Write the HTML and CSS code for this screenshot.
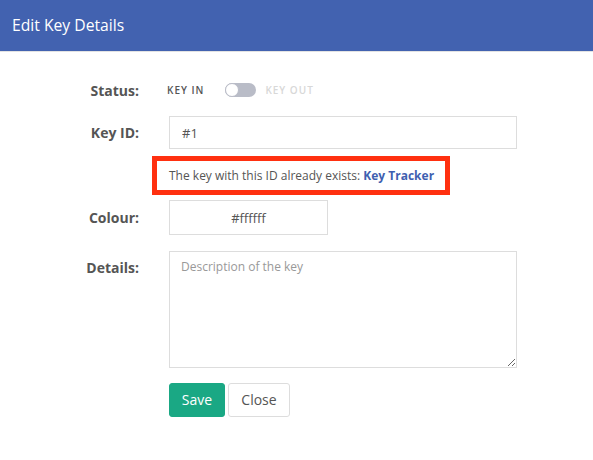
FILE: index.html
```html
<!DOCTYPE html>
<html>
<head>
<meta charset="utf-8">
<link rel="stylesheet" href="styles.css">
</head>
<body>
<div class="modal">
  <div class="header">Edit Key Details</div>
  <form class="form">
    <div class="row status-row">
      <label class="label">Status:</label>
      <div class="toggle-group">
        <span class="state on">KEY IN</span>
        <span class="switch"><span class="knob"></span></span>
        <span class="state off">KEY OUT</span>
      </div>
    </div>
    <div class="row id-row">
      <label class="label">Key ID:</label>
      <input class="input wide" type="text" value="#1">
    </div>
    <div class="row msg-row">
      <div class="alert">The key with this ID already exists: <a class="link">Key Tracker</a></div>
    </div>
    <div class="row colour-row">
      <label class="label">Colour:</label>
      <input class="input colour" type="text" value="#ffffff">
    </div>
    <div class="row details-row">
      <label class="label top">Details:</label>
      <textarea class="input wide area" placeholder="Description of the key"></textarea>
    </div>
    <div class="row btn-row">
      <button type="button" class="btn save">Save</button>
      <button type="button" class="btn close">Close</button>
    </div>
  </form>
</div>
</body>
</html>
```
FILE: styles.css
```css
* { box-sizing: border-box; }
body {
  margin: 0;
  font-family: "Open Sans", "Noto Sans", sans-serif;
  background: #fff;
  color: #555;
}
.header {
  height: 52px;
  background: #4262b0;
  color: #fff;
  font-size: 15.7px;
  line-height: 51px;
  padding-left: 12px;
  border-bottom: 1px solid #e3e3e3;
}
.form {
  display: flex;
  flex-direction: column;
}
.row {
  display: flex;
  align-items: center;
  gap: 30px;
}
.label {
  width: 139px;
  text-align: right;
  font-weight: 700;
  font-size: 14px;
  color: #555;
  flex: none;
}
.label.top { align-self: flex-start; padding-top: 7px; }
.status-row { margin-top: 29px; height: 18px; }
.toggle-group {
  display: flex;
  align-items: center;
}
.state {
  font-size: 10px;
  font-weight: 600;
  letter-spacing: 1px;
}
.state.on { color: #555; margin-left: -2px; }
.state.off { color: #d8d8d8; margin-left: 9px; }
.switch {
  margin-left: 21px;
  width: 31px;
  height: 14px;
  border-radius: 7px;
  background: #b9bcc7;
  position: relative;
  display: inline-block;
}
.knob {
  position: absolute;
  left: 0;
  top: 0;
  width: 14px;
  height: 14px;
  border-radius: 50%;
  background: #fff;
  border: 1px solid #b9bcc7;
}
.input {
  font-family: "Open Sans", "Noto Sans", sans-serif;
  font-size: 13px;
  color: #555;
  border: 1px solid #ddd;
  border-radius: 0;
  padding: 0 12px;
  outline: none;
  background: #fff;
}
.wide { width: 348px; }
.id-row { margin-top: 17px; }
.id-row .input { height: 33px; }
.msg-row { margin-top: 7px; padding-left: 152px; }
.alert {
  width: 298px;
  height: 39px;
  border: 5px solid #ff3010;
  padding-left: 12px;
  font-size: 12px;
  line-height: 29px;
  color: #555;
}
.link { color: #3f5fb0; font-weight: 700; }
.colour-row { margin-top: 5px; }
.colour {
  width: 159px;
  height: 35px;
  text-align: center;
}
.details-row { margin-top: 16px; align-items: flex-start; }
.area {
  height: 117px;
  padding: 6px 11px;
  resize: vertical;
  font-size: 12px;
  line-height: 18px;
}
.area::placeholder { color: #999; }
.btn-row { margin-top: 15px; padding-left: 169px; gap: 3px; }
.btn {
  font-family: "Open Sans", "Noto Sans", sans-serif;
  font-size: 14px;
  height: 34px;
  padding-bottom: 2px;
  border-radius: 3px;
  cursor: pointer;
}
.save {
  width: 56px;
  background: #1aa884;
  color: #fff;
  border: 1px solid #1aa884;
}
.close {
  width: 62px;
  background: #fff;
  color: #555;
  border: 1px solid #ddd;
}
```
